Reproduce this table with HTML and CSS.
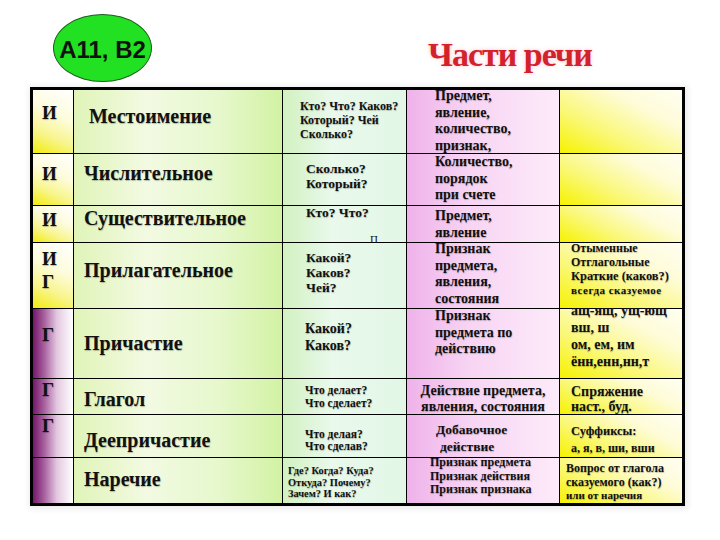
FILE: index.html
```html
<!DOCTYPE html>
<html lang="ru">
<head>
<meta charset="utf-8">
<title>Части речи</title>
<link rel="stylesheet" href="styles.css">
</head>
<body>
<div class="page">
  <header class="header">
    <div class="badge"><span>А11, В2</span></div>
    <h1 class="title">Части речи</h1>
  </header>

  <div class="grid">
    <!-- row 1 -->
    <div class="c k1y l1">И</div>
    <div class="c k2 n n1">Местоимение</div>
    <div class="c k3 q q1">Кто? Что? Каков?<br>Который? Чей<br>Сколько?</div>
    <div class="c k4 d"><div class="m2">Предмет,<br>явление,<br>количество,<br>признак,</div></div>
    <div class="c k5"></div>
    <!-- row 2 -->
    <div class="c k1y l2">И</div>
    <div class="c k2 n n2">Числительное</div>
    <div class="c k3 q q2">Сколько?<br>Который?</div>
    <div class="c k4 d"><div>Количество,<br>порядок<br>при счете</div></div>
    <div class="c k5"></div>
    <!-- row 3 -->
    <div class="c k1y l3">И</div>
    <div class="c k2 n n3">Существительное</div>
    <div class="c k3 q q3">Кто? Что?</div>
    <div class="c k4 d d3"><div>Предмет,<br>явление</div></div>
    <div class="c k5"></div>
    <!-- row 4 -->
    <div class="c k1y l4">И<br>Г</div>
    <div class="c k2 n n4">Прилагательное</div>
    <div class="c k3 q q4 stray-host">Какой?<br>Каков?<br>Чей?<span class="stray">П</span></div>
    <div class="c k4 d"><div class="m2">Признак<br>предмета,<br>явления,<br>состояния</div></div>
    <div class="c k5 e4">
      <div class="m2">
        <div class="e4a">Отыменные</div>
        <div class="e4a">Отглагольные</div>
        <div class="e4b">Краткие (каков?)</div>
        <div class="e4c">всегда сказуемое</div>
      </div>
    </div>
    <!-- row 5 -->
    <div class="c k1p l5">Г</div>
    <div class="c k2 n n5">Причастие</div>
    <div class="c k3 q q5">Какой?<br>Каков?</div>
    <div class="c k4 d"><div class="m1">Признак<br>предмета по<br>действию</div></div>
    <div class="c k5 e5"><div class="m7">ащ-ящ, ущ-ющ<br>вш, ш<br>ом, ем, им<br>ённ,енн,нн,т</div></div>
    <!-- row 6 -->
    <div class="c k1p l6">Г</div>
    <div class="c k2 n n6">Глагол</div>
    <div class="c k3 q q6">Что делает?<br>Что сделает?</div>
    <div class="c k4 d6">Действие предмета,<br>явления, состояния</div>
    <div class="c k5 e6">Спряжение<br>наст., буд.</div>
    <!-- row 7 -->
    <div class="c k1p l7">Г</div>
    <div class="c k2 n n7">Деепричастие</div>
    <div class="c k3 q q7">Что делая?<br>Что сделав?</div>
    <div class="c k4 d7"><div>Добавочное</div><div class="d7b">действие</div></div>
    <div class="c k5 e7"><div class="e7a">Суффиксы:</div><div class="e7b">а, я, в, ши, вши</div></div>
    <!-- row 8 -->
    <div class="c k1p"></div>
    <div class="c k2 n n8">Наречие</div>
    <div class="c k3 q q8">Где? Когда? Куда?<br>Откуда? Почему?<br>Зачем? И как?</div>
    <div class="c k4 d8"><div class="m2">Признак предмета<br>Признак действия<br>Признак признака</div></div>
    <div class="c k5 e8"><div class="e8a">Вопрос от глагола</div><div class="e8a">сказуемого (как?)</div><div class="e8b">или от наречия</div></div>
  </div>
</div>
</body>
</html>
```

FILE: styles.css
```css
html, body {
  margin: 0;
  padding: 0;
  background: #ffffff;
}

.page {
  width: 720px;
  height: 540px;
  font-family: "Liberation Serif", "Times New Roman", serif;
  color: #111;
}

.header {
  display: flex;
  align-items: flex-start;
  height: 87px;
}

.badge {
  margin-top: 14px;
  margin-left: 53px;
  width: 99px;
  height: 68px;
  box-sizing: border-box;
  border: 1px solid #1d5e1d;
  border-radius: 50%;
  background: #22e022;
  display: flex;
  align-items: center;
  justify-content: center;
  padding-top: 4px;
  font-family: "Liberation Sans", Arial, sans-serif;
  font-weight: bold;
  font-size: 24px;
  color: #111;
  white-space: nowrap;
}

.title {
  margin: 35px 0 0 276px;
  font-family: "Liberation Serif", "Times New Roman", serif;
  font-weight: bold;
  font-size: 34px;
  line-height: 40px;
  letter-spacing: -1px;
  color: #d2222c;
  text-shadow: 0 0 4px rgba(255, 150, 170, 0.55);
  white-space: nowrap;
}

.grid {
  margin-left: 30px;
  width: 655px;
  box-sizing: border-box;
  border: 3px solid #000;
  display: grid;
  grid-template-columns: 41px 209px 124px 153px 122px;
  grid-template-rows: 64px 52px 37px 66px 70px 36px 43px 45px;
  box-shadow: 1px 1px 6px 2px rgba(0, 0, 0, 0.08);
  font-family: "Liberation Serif", "Times New Roman", serif;
  font-weight: bold;
}

.c {
  box-sizing: border-box;
  border-right: 1px solid #000;
  border-bottom: 1px solid #000;
  white-space: nowrap;
  text-shadow: 0.5px 0.5px 1px rgba(0, 0, 0, 0.25);
}
.c:nth-child(5n) { border-right: 0; }
.c:nth-last-child(-n+5) { border-bottom: 0; }

/* backgrounds */
.k1y { background: linear-gradient(25deg, #f2ec0c 0%, #f8f58e 30%, #fdfcdc 60%, #ffffff 100%); }
.k1p { background: linear-gradient(90deg, #74186a 0%, #a8609f 28%, #e4c8e0 60%, #ffffff 100%); }
.k2  { background: linear-gradient(90deg, #e0f4b8 0%, #f2fae2 35%, #e6f8cc 70%, #d2f2a4 100%); }
.k3  { background: linear-gradient(90deg, #d2f1c0 0%, #e9f9ec 40%, #e2f7e6 100%); }
.k4  { background: linear-gradient(90deg, #efb2ea 0%, #f7d4f3 40%, #fdebfa 100%); }
.k5  { background: linear-gradient(28deg, #f6f200 0%, #faf878 35%, #fefcd8 70%, #fffef2 100%); }

.m1 { margin-top: -1px; }
.m2 { margin-top: -2px; }
.m7 { margin-top: -7px; }

/* column 1 letters */
.l1, .l2, .l3, .l4, .l5, .l6, .l7 {
  font-size: 19px;
  line-height: 21px;
  padding-left: 9px;
}
.l1 { padding-top: 12px; }
.l2 { padding-top: 9px; }
.l3 { padding-top: 3px; }
.l4 { padding-top: 4px; line-height: 23px; }
.l5 { padding-top: 15px; }
.l6 { padding-top: 0; }
.l7 { padding-top: 0; }

/* column 2 names */
.n {
  font-size: 20px;
  line-height: 22px;
  padding-left: 10px;
}
.n1 { padding-top: 15px; padding-left: 15px; }
.n2 { padding-top: 8px; }
.n3 { padding-top: 1px; }
.n4 { padding-top: 16px; }
.n5 { padding-top: 23px; }
.n6 { padding-top: 9px; }
.n7 { padding-top: 14px; }
.n8 { padding-top: 10px; }

/* column 3 questions */
.q1 { font-size: 12px; line-height: 14px; padding: 9px 0 0 17px; }
.q2 { font-size: 13.5px; line-height: 15px; padding: 7px 0 0 23px; }
.q3 { font-size: 13.5px; line-height: 13px; padding: 0 0 0 23px; }
.q4 { font-size: 13.5px; line-height: 15px; padding: 7px 0 0 23px; }
.q5 { font-size: 14px; line-height: 17px; padding: 11px 0 0 22px; }
.q6 { font-size: 11.5px; line-height: 12.5px; padding: 5px 0 0 22px; }
.q7 { font-size: 11.5px; line-height: 11.5px; padding: 14px 0 0 22px; }
.q8 { font-size: 10.4px; line-height: 11.5px; padding: 7px 0 0 5px; }

.stray-host { position: relative; }
.stray {
  position: absolute;
  left: 87px;
  top: -9px;
  font-size: 11px;
  line-height: 11px;
  font-weight: normal;
  text-shadow: none;
}

/* column 4 meaning */
.d {
  font-size: 14px;
  line-height: 16.5px;
  padding-left: 28px;
}
.d3 { padding-top: 2px; }
.d6 {
  font-size: 14px;
  line-height: 16px;
  padding-top: 4px;
  text-align: center;
}
.d7 {
  font-size: 13.5px;
  line-height: 17px;
  padding: 6px 0 0 29px;
}
.d7b { padding-left: 4px; }
.d8 {
  font-size: 12px;
  line-height: 13.5px;
  padding-left: 23px;
}

/* column 5 notes */
.e4 { padding-left: 11px; line-height: 14px; }
.e4a { font-size: 12px; }
.e4b { font-size: 12.4px; }
.e4c { font-size: 11px; letter-spacing: 0.5px; }
.e5 { padding-left: 11px; font-size: 14px; line-height: 17px; }
.e6 { padding: 5px 0 0 11px; font-size: 14px; line-height: 15px; }
.e7 { padding: 9px 0 0 11px; }
.e7a { font-size: 12.5px; line-height: 15px; }
.e7b { font-size: 12px; line-height: 18px; }
.e8 { padding: 3px 0 0 6px; }
.e8a { font-size: 12px; line-height: 14px; }
.e8b { font-size: 11px; line-height: 13px; }
```
